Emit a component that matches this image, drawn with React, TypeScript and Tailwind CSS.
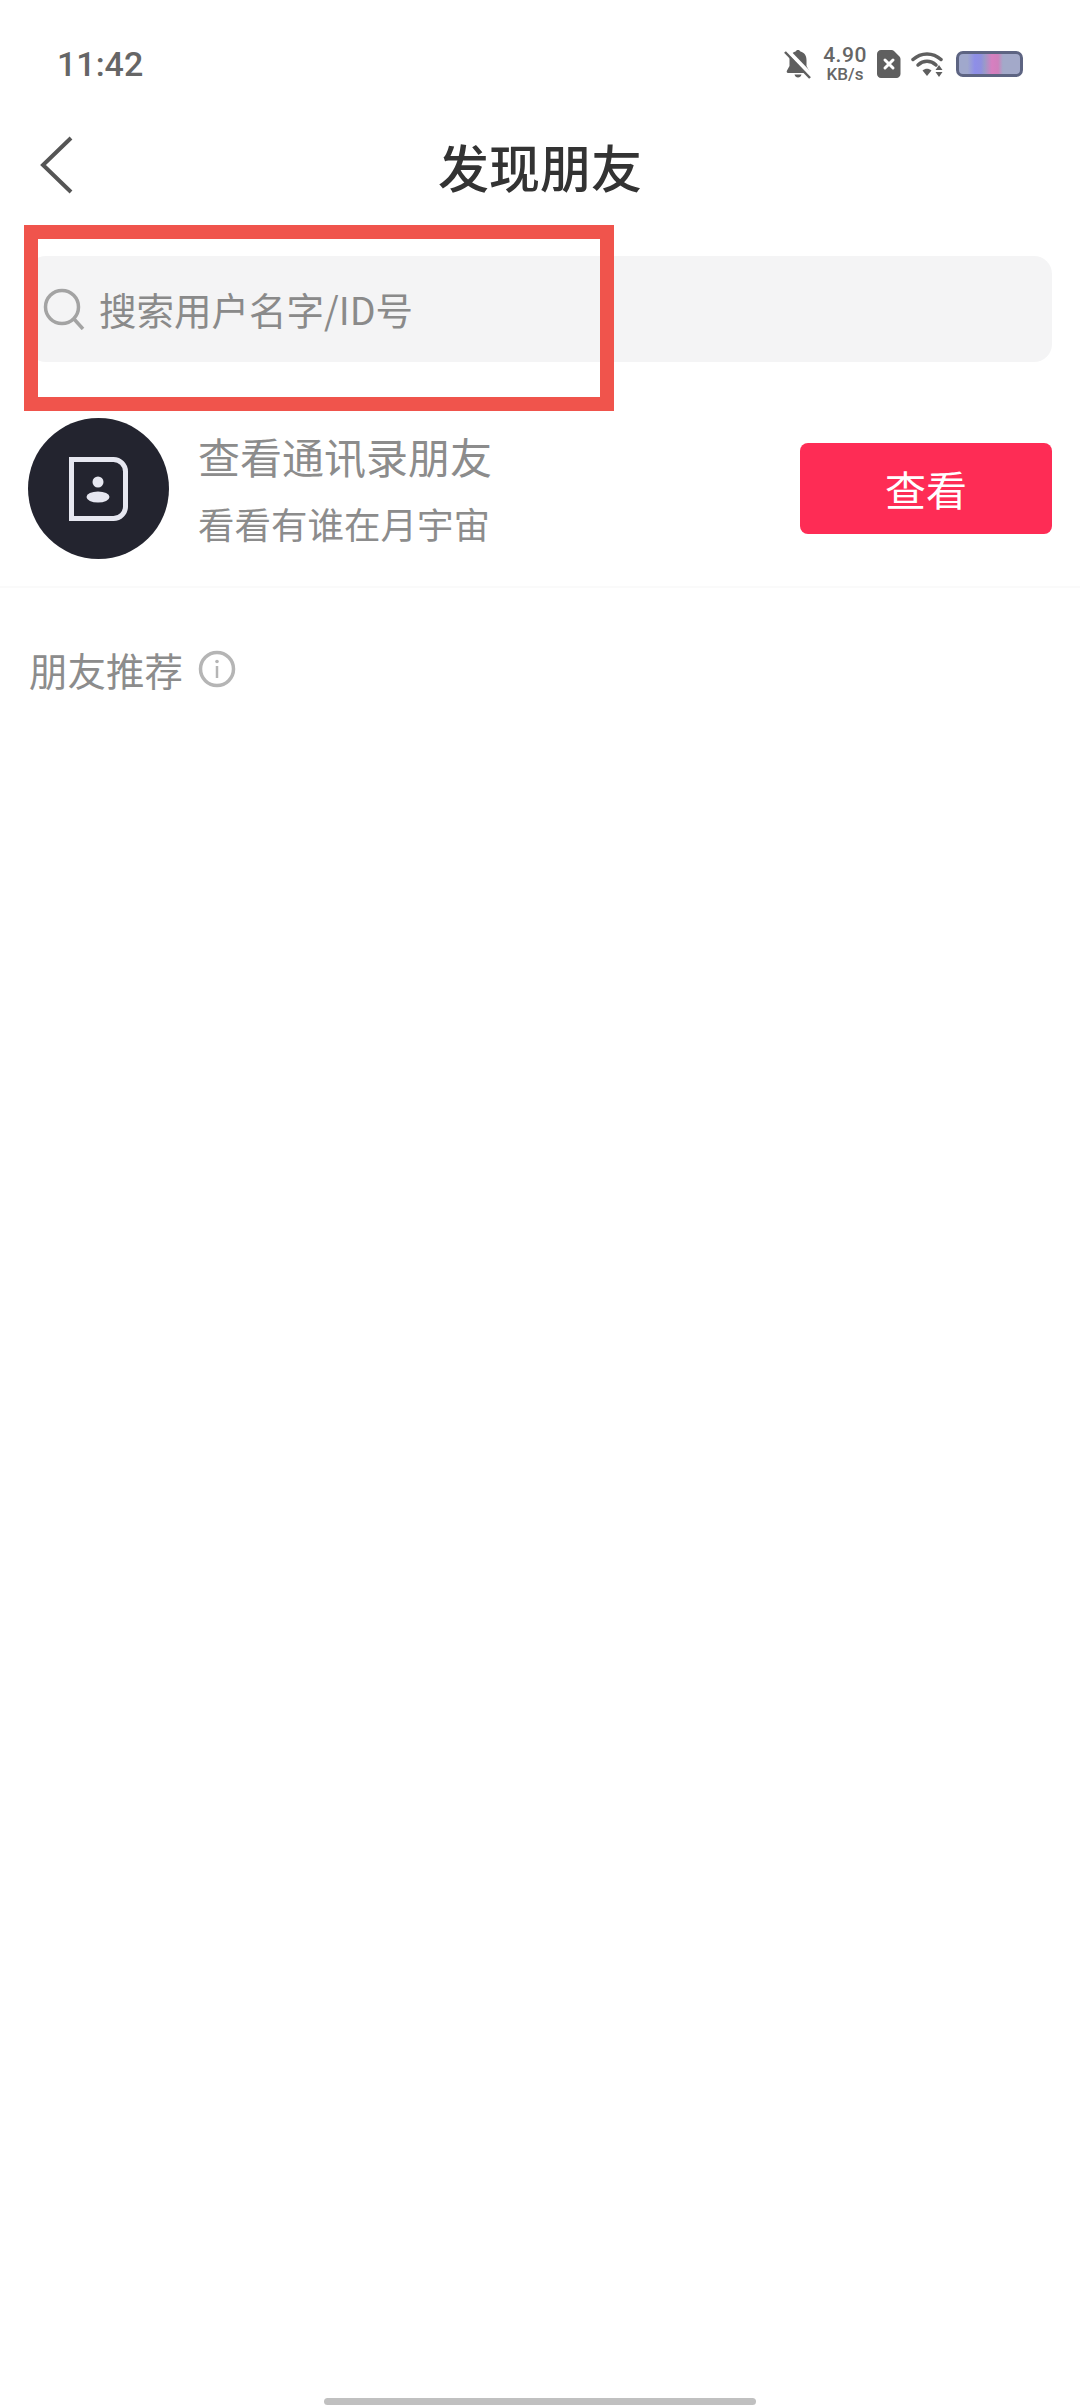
const StatusIcons = () => (
  <div className="flex items-center">
    {/* muted bell */}
    <svg width="28" height="30" viewBox="0 0 28 30" className="text-[#5f5f5f]">
      <path
        d="M14 1c-1.200 0-2 .6-2.400 1.600C7.500 3.600 5.500 7 5.500 11v6l-2.500 4.500c-.8 1.500 0 2.500 1 2.500h20c1 0 1.800-1 1-2.500L22.500 17v-6c0-4-2-7.400-6.100-8.400C16 1.600 15.200 1 14 1z"
        fill="currentColor"
      />
      <path d="M10.500 25.500c.5 1.800 1.800 3 3.500 3s3-1.200 3.500-3z" fill="currentColor" />
      <path d="M3 1l25 26" stroke="#fff" strokeWidth="4" />
      <path d="M1 3l25 26" stroke="currentColor" strokeWidth="2.500" />
    </svg>
    <div className="ml-[9px] w-[48px] flex flex-col items-center font-['Roboto',sans-serif] font-medium text-[#666]">
      <span className="text-[21px] leading-[21px] tracking-[0.5px]">4.90</span>
      <span className="text-[17px] leading-[17px]">KB/s</span>
    </div>
    {/* sim */}
    <svg width="24" height="28" viewBox="0 0 24 28" className="ml-[8px] text-[#5f5f5f]">
      <path
        d="M4 0h10.500c1 0 1.800.4 2.500 1l5.500 5.500c.7.7 1 1.500 1 2.500v15c0 2.200-1.800 4-4 4H4c-2.200 0-4-1.800-4-4V4c0-2.200 1.800-4 4-4z"
        fill="currentColor"
      />
      <path d="M8 10l8 8M16 10l-8 8" stroke="#fff" strokeWidth="3" strokeLinecap="round" />
    </svg>
    {/* wifi */}
    <svg width="35" height="28" viewBox="0 0 35 28" className="ml-[10px] text-[#5f5f5f]">
      <path d="M2 9.500C10 2 22 2 30 9.500" fill="none" stroke="currentColor" strokeWidth="3.500" strokeLinecap="round" />
      <path d="M7 15c5.500-5 12.500-5 18 0" fill="none" stroke="currentColor" strokeWidth="3.500" strokeLinecap="round" />
      <path d="M11.500 20.500c3-2.500 6-2.500 9 0L16 26z" fill="currentColor" />
      <path d="M28 15l3.500 5h-7zM24.500 22h7L28 27z" fill="currentColor" />
    </svg>
    {/* battery */}
    <div className="ml-[10px] w-[67px] h-[26px] rounded-[7px] border-[3px] border-[#5d6482] bg-[linear-gradient(90deg,#a0a8cc_0%,#a0a8cc_14%,#8e8ee8_26%,#8f8fe0_36%,#9a9ac8_42%,#d77fc0_54%,#cf80bc_64%,#a3a9c9_72%,#a3a9c9_100%)]" />
  </div>
);

const ContactsIcon = () => (
  <svg width="59" height="64" viewBox="0 0 59 64" className="text-[#e6e7f0]">
    <path
      d="M2.500 2.500h42c6.500 0 12 5.500 12 12v35c0 6.500-5.500 12-12 12h-42z"
      fill="none"
      stroke="currentColor"
      strokeWidth="5"
    />
    <circle cx="29" cy="25" r="5.500" fill="currentColor" />
    <ellipse cx="29" cy="40" rx="11.500" ry="5.500" fill="currentColor" />
  </svg>
);

const App = () => {
  return (
    <div className="relative w-[1080px] h-[2408px] flex flex-col bg-white font-['Noto_Sans_CJK_SC','Noto_Sans',sans-serif]">
      <div className="h-[128px] pl-[57px] pr-[57px] flex items-center justify-between">
        <span className="font-['Roboto',sans-serif] font-medium text-[34px] text-[#666]">11:42</span>
        <StatusIcons />
      </div>

      <div className="relative h-[76px] flex items-center justify-center">
        <svg width="36" height="60" viewBox="0 0 36 60" className="absolute left-[38px] top-[7px] text-[#555]">
          <path d="M33 3L5 30l28 27" fill="none" stroke="currentColor" strokeWidth="4" />
        </svg>
        <h1 className="text-[51px] leading-[72px] font-medium text-[#333]">发现朋友</h1>
      </div>

      <div className="mt-[52px] mx-[28px] h-[106px] rounded-[18px] bg-[#f4f4f5] flex items-center pl-[15px]">
        <svg width="42" height="42" viewBox="0 0 42 42" className="text-[#a3a3a3]">
          <circle cx="19" cy="19" r="16.500" fill="none" stroke="currentColor" strokeWidth="3.500" />
          <path d="M31 31l9 10" stroke="currentColor" strokeWidth="3.500" />
        </svg>
        <span className="ml-[14px] text-[37.500px] leading-[42px] text-[#8a8a8a]">搜索用户名字/ID号</span>
      </div>

      <div className="mt-[56px] pl-[28px] pr-[28px] pb-[27px] flex items-center border-b-2 border-[#fafafa]">
        <div className="w-[141px] h-[141px] shrink-0 rounded-full bg-[#23242f] flex items-center justify-center">
          <ContactsIcon />
        </div>
        <div className="ml-[29px] flex flex-col">
          <span className="text-[42px] leading-[48px] text-[#8c8c8c]">查看通讯录朋友</span>
          <span className="mt-[22px] text-[36.500px] leading-[44px] text-[#8c8c8c]">看看有谁在月宇宙</span>
        </div>
        <button className="ml-auto w-[252px] h-[91px] rounded-[8px] bg-[#fe2c55] text-white text-[41px]">查看</button>
      </div>

      <div className="mt-[62px] pl-[29px] flex items-center">
        <span className="text-[38.500px] leading-[38px] text-[#8c8c8c]">朋友推荐</span>
        <svg width="38" height="38" viewBox="0 0 38 38" className="ml-[15px] text-[#b5b5b5]">
          <circle cx="19" cy="19" r="16.500" fill="none" stroke="currentColor" strokeWidth="3.500" />
          <circle cx="19" cy="11.500" r="1.800" fill="currentColor" />
          <path d="M19 16v12" stroke="currentColor" strokeWidth="2.500" />
        </svg>
      </div>

      <div className="mt-auto mb-[3px] mx-auto w-[432px] h-[7px] rounded-full bg-[#c0c0c0]" />

      {/* annotation box drawn over the search field */}
      <div className="absolute left-[24px] top-[225px] w-[590px] h-[186px] border-[14px] border-[#f0544c]" />
    </div>
  );
};

export default App;
